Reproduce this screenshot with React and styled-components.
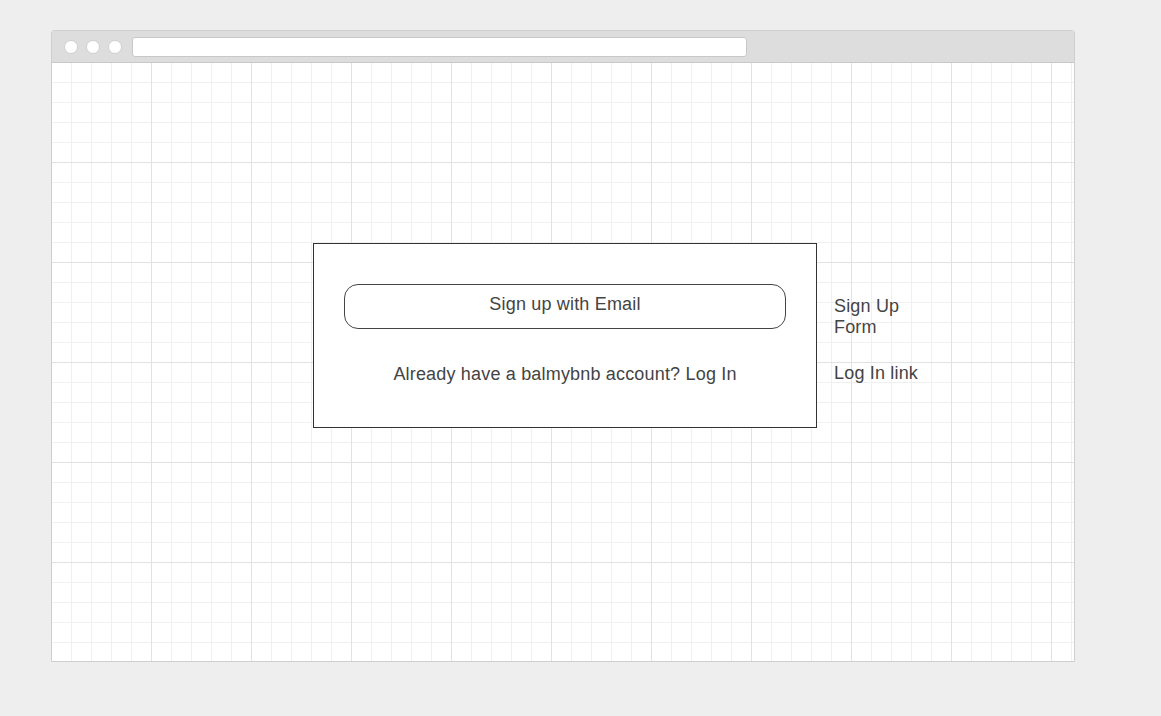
import React from 'react'
import styled, { createGlobalStyle } from 'styled-components'

const GlobalStyle = createGlobalStyle`
  html, body {
    margin: 0;
    padding: 0;
    background: #eeeeee;
    font-family: "Liberation Sans", Arial, sans-serif;
  }
`

const Page = styled.div`
  width: 1161px;
  height: 716px;
  padding: 30px 0 0 51px;
  box-sizing: border-box;
`

const Window = styled.div`
  width: 1024px;
  height: 632px;
  box-sizing: border-box;
  border: 1px solid #cfcfcf;
  border-radius: 3px 3px 0 0;
  background: #fff;
  display: flex;
  flex-direction: column;
  overflow: hidden;
`

const TitleBar = styled.div`
  height: 31px;
  flex: none;
  background: #dddddd;
  border-bottom: 1px solid #c8c8c8;
  display: flex;
  align-items: center;
  padding-left: 12px;
  gap: 8px;
`

const Dot = styled.span`
  width: 14px;
  height: 14px;
  box-sizing: border-box;
  border-radius: 50%;
  background: #fff;
  border: 1px solid #d0d0d0;
`

const AddressBar = styled.div`
  width: 615px;
  height: 20px;
  margin-left: 2px;
  box-sizing: border-box;
  background: #fff;
  border: 1px solid #c8c8c8;
  border-radius: 3px;
`

const Canvas = styled.div`
  flex: 1;
  display: flex;
  align-items: flex-start;
  padding: 180px 0 0 261px;
  background-color: #fff;
  background-image:
    linear-gradient(to right, transparent 99px, #e2e2e2 99px, #e2e2e2 100px),
    linear-gradient(to bottom, transparent 99px, #e2e2e2 99px, #e2e2e2 100px),
    linear-gradient(to right, transparent 19px, #f0f0f0 19px, #f0f0f0 20px),
    linear-gradient(to bottom, transparent 19px, #f0f0f0 19px, #f0f0f0 20px);
  background-size: 100px 100px, 100px 100px, 20px 20px, 20px 20px;
`

const FormBox = styled.div`
  width: 504px;
  box-sizing: border-box;
  background: #fff;
  border: 1px solid #333;
  padding: 40px 30px 42px;
  display: flex;
  flex-direction: column;
  align-items: stretch;
  letter-spacing: 0.18px;
`

const EmailButton = styled.button`
  height: 45px;
  margin: 0;
  padding: 0 0 5px;
  background: #fff;
  border: 1px solid #444;
  border-radius: 14px;
  font-family: inherit;
  font-size: 18px;
  letter-spacing: inherit;
  color: #444;
  text-align: center;
  cursor: pointer;
`

const LoginText = styled.p`
  margin: 35px 0 0;
  font-size: 18px;
  color: #444;
  text-align: center;
`

const Notes = styled.div`
  width: 90px;
  margin: 53px 0 0 17px;
  display: flex;
  flex-direction: column;
  gap: 25px;
  letter-spacing: 0.18px;
`

const Note = styled.div`
  font-size: 18px;
  color: #444;
`

export default function App() {
  return (
    <>
      <GlobalStyle />
      <Page>
        <Window>
          <TitleBar>
            <Dot />
            <Dot />
            <Dot />
            <AddressBar />
          </TitleBar>
          <Canvas>
            <FormBox>
              <EmailButton type="button">Sign up with Email</EmailButton>
              <LoginText>Already have a balmybnb account? Log In</LoginText>
            </FormBox>
            <Notes>
              <Note>Sign Up Form</Note>
              <Note>Log In link</Note>
            </Notes>
          </Canvas>
        </Window>
      </Page>
    </>
  )
}
